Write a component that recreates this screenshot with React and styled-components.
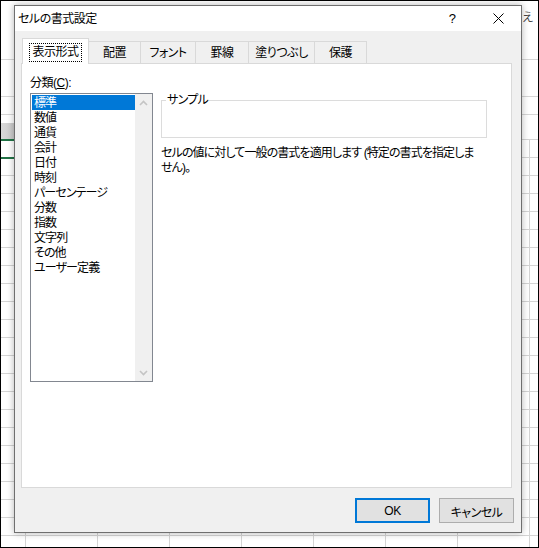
import React from "react";
import styled, { createGlobalStyle } from "styled-components";

const GlobalStyle = createGlobalStyle`
  body {
    margin: 0;
    font-family: "Liberation Sans", "Noto Sans CJK JP", sans-serif;
  }
`;

const FONT = `"Liberation Sans", "Noto Sans CJK JP", "Noto Sans", sans-serif`;

const Frame = styled.div`
  position: relative;
  width: 539px;
  height: 548px;
  box-sizing: border-box;
  border: 1px solid #000;
  background: #fff;
  overflow: hidden;
  display: flex;
  flex-direction: column;
  font-family: ${FONT};
  font-feature-settings: "palt";
`;

const Ribbon = styled.div`
  height: 59px;
  flex-shrink: 0;
  border-bottom: 1px solid #d6d6d6;
  display: flex;
  justify-content: flex-end;
  padding: 9px 5px 0 0;
  box-sizing: border-box;
  font-size: 12px;
  line-height: 16px;
  color: #444;
`;

const FormulaBar = styled.div`
  height: 37px;
  flex-shrink: 0;
  box-sizing: border-box;
  border-bottom: 1px solid #d6d6d6;
`;

const ColumnHeaders = styled.div`
  height: 18px;
  flex-shrink: 0;
  box-sizing: border-box;
  border-bottom: 1px solid #d6d6d6;
`;

const HeaderBand = styled.div`
  height: 24px;
  flex-shrink: 0;
  display: flex;
  align-items: flex-end;
`;

const SelectedHeader = styled.div`
  width: 14px;
  height: 16px;
  background: linear-gradient(to right, #d8d8d8, #cacaca);
`;

const Cells = styled.div`
  flex: 1;
  background-image: repeating-linear-gradient(
      to bottom,
      #d4d4d4 0 1px,
      transparent 1px 18px
    ),
    repeating-linear-gradient(to right, #d4d4d4 0 1px, transparent 1px 72px);
  background-position: 0 0, 24px 0;
`;

const ActiveCell = styled.div`
  width: 60px;
  height: 20px;
  box-sizing: border-box;
  border-top: 2px solid #217346;
  border-bottom: 2px solid #217346;
`;

const Dialog = styled.div`
  position: absolute;
  left: 13px;
  top: 4px;
  width: 508px;
  height: 528px;
  box-sizing: border-box;
  border: 1px solid #6f6f6f;
  background: #f0f0f0;
  box-shadow: 0 0 7px rgba(0, 0, 0, 0.3);
  display: flex;
  flex-direction: column;
  color: #000;
  font-size: 12px;
  letter-spacing: -0.5px;
`;

const TitleBar = styled.div`
  height: 25px;
  flex-shrink: 0;
  background: #fff;
  display: flex;
  align-items: center;
  padding-left: 3px;
`;

const Title = styled.div`
  flex: 1;
  font-size: 12px;
  line-height: 17px;
  padding-top: 1px;
`;

const TitleButton = styled.div`
  width: 46px;
  height: 25px;
  display: flex;
  align-items: center;
  justify-content: center;
  font-size: 13px;
`;

const Body = styled.div`
  flex: 1;
  display: flex;
  flex-direction: column;
  padding: 7px 7px 9px 6px;
`;

const TabRow = styled.div`
  height: 25px;
  display: flex;
  align-items: flex-end;
  padding-left: 1px;
`;

const Tab = styled.div`
  position: relative;
  width: ${({ $w }) => $w}px;
  height: ${({ $active }) => ($active ? 26 : 22)}px;
  margin-bottom: ${({ $active }) => ($active ? -1 : 0)}px;
  margin-right: -1px;
  box-sizing: border-box;
  border: 1px solid #d9d9d9;
  border-bottom: none;
  background: ${({ $active }) => ($active ? "#fff" : "#f0f0f0")};
  z-index: ${({ $active }) => ($active ? 2 : 1)};
  display: flex;
  align-items: center;
  justify-content: center;
  font-size: 12px;
  line-height: 15px;
  padding-top: 1px;
`;

const FocusLabel = styled.span`
  outline: 1px dotted #000;
  outline-offset: 1px;
  padding: 0 1px;
`;

const Panel = styled.div`
  position: relative;
  z-index: 1;
  height: 425px;
  box-sizing: border-box;
  margin-right: 2px;
  border: 1px solid #d9d9d9;
  background: #fff;
  padding: 10px 8px;
  display: grid;
  grid-template-columns: 123px 326px;
  column-gap: 8px;
  align-items: start;
`;

const Column = styled.div`
  display: flex;
  flex-direction: column;
`;

const FieldLabel = styled.div`
  height: 16px;
  line-height: 18px;
  margin-bottom: 3px;

  & u {
    text-decoration: underline;
  }
`;

const ListBox = styled.div`
  width: 123px;
  height: 289px;
  box-sizing: border-box;
  border: 1px solid #828790;
  padding: 1px 0 1px 1px;
  display: flex;
`;

const Items = styled.div`
  flex: 1;
`;

const Item = styled.div`
  height: 15px;
  line-height: 17px;
  padding-left: 2px;
  letter-spacing: -0.9px;
  white-space: nowrap;
  background: ${({ $selected }) => ($selected ? "#0078d7" : "transparent")};
  color: ${({ $selected }) => ($selected ? "#fff" : "#000")};
`;

const ScrollBar = styled.div`
  width: 17px;
  margin: -1px 0;
  background: #f0f0f0;
  display: flex;
  flex-direction: column;
  justify-content: space-between;
`;

const ScrollArrow = styled.div`
  height: 17px;
  display: flex;
  align-items: center;
  justify-content: center;
`;

const SampleBox = styled.fieldset`
  margin: 18px 0 0 0;
  padding: 0;
  height: 46px;
  box-sizing: border-box;
  border: 1px solid #dcdcdc;
  min-inline-size: 0;
`;

const SampleLegend = styled.legend`
  margin-left: 4px;
  padding: 0 1px;
  line-height: 16px;
  font-size: 12px;
  letter-spacing: -0.7px;
`;

const Description = styled.div`
  margin-top: 8px;
  line-height: 15px;
  letter-spacing: -0.9px;
  white-space: nowrap;
`;

const ButtonRow = styled.div`
  margin-top: 10px;
  display: flex;
  justify-content: flex-end;
  gap: 9px;
`;

const Button = styled.div`
  width: 75px;
  height: 25px;
  box-sizing: border-box;
  background: #e1e1e1;
  border: ${({ $primary }) =>
    $primary ? "2px solid #0078d7" : "1px solid #adadad"};
  display: flex;
  align-items: center;
  justify-content: center;
  font-size: 12px;
  padding-top: 1px;
`;

const tabs = [
  { label: "表示形式", w: 67, active: true },
  { label: "配置", w: 53 },
  { label: "フォント", w: 56 },
  { label: "罫線", w: 54 },
  { label: "塗りつぶし", w: 67 },
  { label: "保護", w: 53 },
];

const categories = [
  "標準",
  "数値",
  "通貨",
  "会計",
  "日付",
  "時刻",
  "パーセンテージ",
  "分数",
  "指数",
  "文字列",
  "その他",
  "ユーザー定義",
];

const Chevron = ({ down }) => (
  <svg width="9" height="6" viewBox="0 0 9 6">
    <polyline
      points={down ? "1,1 4.5,4.5 8,1" : "1,5 4.5,1.5 8,5"}
      fill="none"
      stroke="#c4c4c4"
      strokeWidth="1.6"
    />
  </svg>
);

const CloseIcon = () => (
  <svg width="11" height="11" viewBox="0 0 11 11">
    <path d="M0.5 0.5 L10.5 10.5 M10.5 0.5 L0.5 10.5" stroke="#000" strokeWidth="1" />
  </svg>
);

const App = () => {
  return (
    <>
      <GlobalStyle />
      <Frame>
        <Ribbon>並べ替え</Ribbon>
        <FormulaBar />
        <ColumnHeaders />
        <HeaderBand>
          <SelectedHeader />
        </HeaderBand>
        <Cells>
          <ActiveCell />
        </Cells>

        <Dialog>
          <TitleBar>
            <Title>セルの書式設定</Title>
            <TitleButton>?</TitleButton>
            <TitleButton>
              <CloseIcon />
            </TitleButton>
          </TitleBar>
          <Body>
            <TabRow>
              {tabs.map((t) => (
                <Tab key={t.label} $w={t.w} $active={t.active}>
                  {t.active ? <FocusLabel>{t.label}</FocusLabel> : t.label}
                </Tab>
              ))}
            </TabRow>
            <Panel>
              <Column>
                <FieldLabel>
                  分類(<u>C</u>):
                </FieldLabel>
                <ListBox>
                  <Items>
                    {categories.map((c, idx) => (
                      <Item key={c} $selected={idx === 0}>
                        {c}
                      </Item>
                    ))}
                  </Items>
                  <ScrollBar>
                    <ScrollArrow>
                      <Chevron />
                    </ScrollArrow>
                    <ScrollArrow>
                      <Chevron down />
                    </ScrollArrow>
                  </ScrollBar>
                </ListBox>
              </Column>
              <Column>
                <SampleBox>
                  <SampleLegend>サンプル</SampleLegend>
                </SampleBox>
                <Description>
                  セルの値に対して一般の書式を適用します (特定の書式を指定しま
                  <br />
                  せん)。
                </Description>
              </Column>
            </Panel>
            <ButtonRow>
              <Button $primary>OK</Button>
              <Button>キャンセル</Button>
            </ButtonRow>
          </Body>
        </Dialog>
      </Frame>
    </>
  );
};

export default App;
